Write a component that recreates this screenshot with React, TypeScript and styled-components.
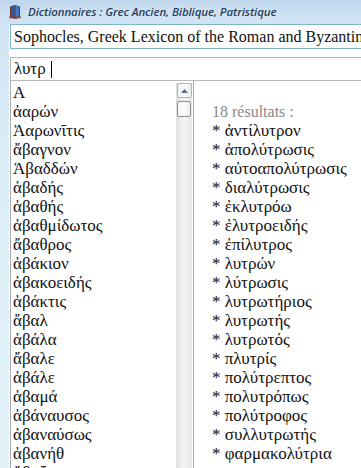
import React from 'react';
import styled, { createGlobalStyle } from 'styled-components';

const GlobalStyle = createGlobalStyle`
    html, body {
        margin: 0;
        padding: 0;
        width: 361px;
        height: 468px;
        overflow: hidden;
        background: #ffffff;
    }
`;

const Window = styled.div`
    width: 361px;
    height: 468px;
    display: flex;
    flex-direction: column;
    background: linear-gradient(180deg, #c0d7ed 0px, #cfe3f3 22px, #d9ecf6 120px, #e4f2f8 468px);
    overflow: hidden;
`;

const TitleBar = styled.div`
    height: 22px;
    flex: none;
    display: flex;
    align-items: center;
    padding: 0 0 0 8px;
    gap: 6px;
`;

const TitleText = styled.span`
    font-family: 'Open Sans', 'Noto Sans', sans-serif;
    font-style: italic;
    font-weight: 600;
    font-size: 11.5px;
    color: #27405f;
    letter-spacing: -0.1px;
    white-space: nowrap;
    text-shadow: 0 0 6px rgba(255, 255, 255, 0.9);
`;

const Client = styled.div`
    flex: 1;
    display: flex;
    flex-direction: column;
    margin: 2px 0 0 9px;
    background: #ffffff;
    min-height: 0;
`;

const DictionaryBox = styled.div`
    height: 23px;
    flex: none;
    display: flex;
    align-items: center;
    border: 1px solid #7fb6cd;
    border-right: none;
    padding: 0 0 0 3px;
    margin: 0 0 0 1px;
    font-family: 'Liberation Serif', serif;
    font-size: 16px;
    color: #111111;
    white-space: nowrap;
    overflow: hidden;
    background: #ffffff;
`;

const Spacer = styled.div`
    height: 8px;
    flex: none;
    background: #ffffff;
`;

const SearchBox = styled.div`
    height: 22px;
    flex: none;
    display: flex;
    align-items: center;
    border-top: 1px solid #b9b9b9;
    border-bottom: 1px solid #b9b9b9;
    border-left: 1px solid #b9b9b9;
    margin: 0 0 0 1px;
    padding: 0 0 0 3px;
    font-family: 'Liberation Serif', serif;
    font-size: 17px;
    color: #111111;
    white-space: pre;
`;

const Caret = styled.span`
    display: inline-block;
    width: 1px;
    height: 17px;
    background: #000000;
    margin-left: 1px;
`;

const Body = styled.div`
    flex: 1;
    display: flex;
    min-height: 0;
`;

const ListBox = styled.div`
    width: 182px;
    flex: none;
    display: flex;
    border-left: 1px solid #a9a9a9;
    border-right: 1px solid #a9a9a9;
    margin: 0 0 0 1px;
    min-height: 0;
`;

const ListItems = styled.div`
    flex: 1;
    padding: 2px 0 0 2px;
    overflow: hidden;
`;

const ListItem = styled.div`
    font-family: 'Liberation Serif', serif;
    font-size: 17px;
    line-height: 19px;
    height: 19px;
    color: #111111;
    white-space: nowrap;
`;

const ScrollBar = styled.div`
    width: 15px;
    flex: none;
    margin: 2px 1px 0 0;
    display: flex;
    flex-direction: column;
    background: linear-gradient(90deg, #e3e3e3, #f4f4f4 50%, #e8e8e8);
    border-left: 1px solid #e0e0e0;
`;

const ScrollButton = styled.div`
    height: 15px;
    flex: none;
    display: flex;
    align-items: center;
    justify-content: center;
    border: 1px solid #b3b3b3;
    border-radius: 2px;
    background: linear-gradient(90deg, #f2f2f2, #fcfcfc 50%, #ececec);
    box-sizing: border-box;
`;

const ScrollThumb = styled.div`
    height: 16px;
    flex: none;
    margin: 3px 1px 0 0;
    border: 1px solid #8e8e8e;
    border-radius: 2px;
    background: linear-gradient(90deg, #f4f4f4, #fdfdfd 50%, #ececec);
    box-sizing: border-box;
`;

const Results = styled.div`
    flex: 1;
    padding: 21px 0 0 18px;
    overflow: hidden;
`;

const ResultsHeader = styled.div`
    font-family: 'Liberation Serif', serif;
    font-size: 16px;
    line-height: 19px;
    height: 19px;
    color: #8a8a8a;
    white-space: nowrap;
`;

const ResultItem = styled.div`
    font-family: 'Liberation Serif', serif;
    font-size: 17px;
    line-height: 19px;
    height: 19px;
    color: #111111;
    white-space: nowrap;
`;

const BookIcon = () => (
    <svg width="14" height="15" viewBox="0 0 14 15">
        <path d="M2 2.5 L7 1 L12 2.5 L12 13 L7 14.5 L2 13 Z" fill="#6b3a22" />
        <path d="M3 2.5 L6.6 1.6 L6.6 13 L3 12.2 Z" fill="#2c5aa8" />
        <path d="M7.4 1.6 L11 2.5 L11 12.2 L7.4 13 Z" fill="#3f78c9" />
        <path d="M1 12.5 L7 14.3 L13 12.5 L13 14 L7 15 L1 14 Z" fill="#b5482e" />
    </svg>
);

const ArrowUp = () => (
    <svg width="7" height="4" viewBox="0 0 7 4">
        <path d="M0 4 L3.5 0 L7 4 Z" fill="#5a6a86" />
    </svg>
);

const headwords = [
    'Α',
    'ἀαρών',
    'Ἀαρωνῖτις',
    'ἄβαγνον',
    'Ἀβαδδών',
    'ἀβαδής',
    'ἀβαθής',
    'ἀβαθμίδωτος',
    'ἄβαθρος',
    'ἀβάκιον',
    'ἀβακοειδής',
    'ἀβάκτις',
    'ἄβαλ',
    'ἀβάλα',
    'ἄβαλε',
    'ἀβάλε',
    'ἀβαμά',
    'ἀβάναυσος',
    'ἀβαναύσως',
    'ἀβανήθ',
    'ἄβαξ',
];

const results = [
    'ἀντίλυτρον',
    'ἀπολύτρωσις',
    'αὐτοαπολύτρωσις',
    'διαλύτρωσις',
    'ἐκλυτρόω',
    'ἐλυτροειδής',
    'ἐπίλυτρος',
    'λυτρών',
    'λύτρωσις',
    'λυτρωτήριος',
    'λυτρωτής',
    'λυτρωτός',
    'πλυτρίς',
    'πολύτρεπτος',
    'πολυτρόπως',
    'πολύτροφος',
    'συλλυτρωτής',
    'φαρμακολύτρια',
];

export default function App() {
    return (
        <>
            <GlobalStyle />
            <Window>
                <TitleBar>
                    <BookIcon />
                    <TitleText>Dictionnaires : Grec Ancien, Biblique, Patristique</TitleText>
                </TitleBar>
                <Client>
                    <DictionaryBox>Sophocles, Greek Lexicon of the Roman and Byzantine Periods</DictionaryBox>
                    <Spacer />
                    <SearchBox>
                        λυτρ <Caret />
                    </SearchBox>
                    <Body>
                        <ListBox>
                            <ListItems>
                                {headwords.map(word => (
                                    <ListItem key={word}>{word}</ListItem>
                                ))}
                            </ListItems>
                            <ScrollBar>
                                <ScrollButton>
                                    <ArrowUp />
                                </ScrollButton>
                                <ScrollThumb />
                            </ScrollBar>
                        </ListBox>
                        <Results>
                            <ResultsHeader>18 résultats :</ResultsHeader>
                            {results.map(word => (
                                <ResultItem key={word}>* {word}</ResultItem>
                            ))}
                        </Results>
                    </Body>
                </Client>
            </Window>
        </>
    );
}
